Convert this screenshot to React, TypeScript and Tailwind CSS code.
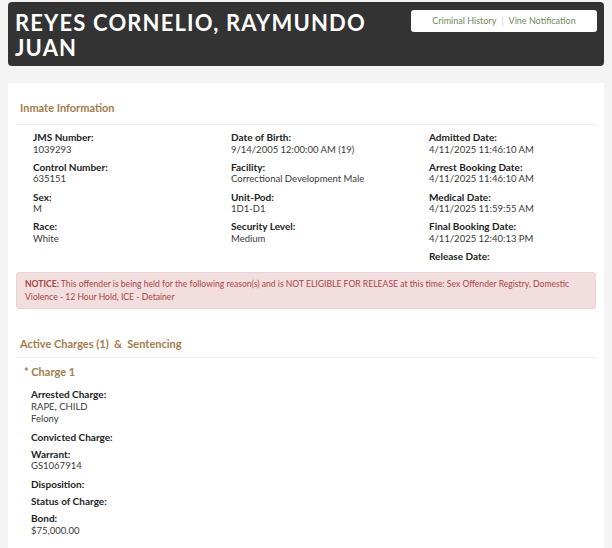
import React from "react";

const font = { fontFamily: "Lato, 'Open Sans', sans-serif" };

function Field({ label, value }: { label: string; value?: string[] }) {
  return (
    <div className="mb-[4.75px]">
      <div className="font-bold text-[10px] leading-[12.5px] text-[#222]">{label}</div>
      {value?.map((v, i) => (
        <div key={i} className="text-[9.5px] leading-[12.5px] text-[#3a3a3a]">{v}</div>
      ))}
    </div>
  );
}

export default function App() {
  return (
    <div style={font} className="min-h-[548px] w-[612px] bg-[#f4f4f4] pt-[2px] px-[8px] overflow-hidden">
      <div className="bg-[#333333] rounded-[4px] flex justify-between items-start pl-[7px] pr-[7px] pt-[8px] h-[64px]">
        <h1 className="text-white font-bold text-[22px] leading-[25px] tracking-[1.15px]">
          REYES CORNELIO, RAYMUNDO
          <br />
          JUAN
        </h1>
        <div className="mt-0 bg-white rounded-[3px] w-[186px] h-[22px] flex items-center justify-center text-[9px] text-[#6f8a5e]">
          <span>Criminal History</span>
          <span className="mx-[5px] text-[#ccc]">|</span>
          <span>Vine Notification</span>
        </div>
      </div>

      <div className="mt-[17px] bg-white pt-[18px] px-[8px] pb-[20px]">
        <div className="text-[11px] font-bold text-[#a47b4c] pl-[4px] pb-[9px] border-b border-[#ececec] leading-[14px]">
          Inmate Information
        </div>
        <div className="grid grid-cols-[198px_198px_1fr] pl-[17px] pt-[6px]">
          <div>
            <Field label="JMS Number:" value={["1039293"]} />
            <Field label="Control Number:" value={["635151"]} />
            <Field label="Sex:" value={["M"]} />
            <Field label="Race:" value={["White"]} />
          </div>
          <div>
            <Field label="Date of Birth:" value={["9/14/2005 12:00:00 AM (19)"]} />
            <Field label="Facility:" value={["Correctional Development Male"]} />
            <Field label="Unit-Pod:" value={["1D1-D1"]} />
            <Field label="Security Level:" value={["Medium"]} />
          </div>
          <div>
            <Field label="Admitted Date:" value={["4/11/2025 11:46:10 AM"]} />
            <Field label="Arrest Booking Date:" value={["4/11/2025 11:46:10 AM"]} />
            <Field label="Medical Date:" value={["4/11/2025 11:59:55 AM"]} />
            <Field label="Final Booking Date:" value={["4/11/2025 12:40:13 PM"]} />
            <Field label="Release Date:" />
          </div>
        </div>

        <p className="mt-[5px] bg-[#f2dede] border border-[#ebd3d3] rounded-[3px] px-[8px] py-[5px] text-[8.6px] leading-[12.5px] text-[#a94442]">
          <b>NOTICE:</b> This offender is being held for the following reason(s) and is NOT ELIGIBLE FOR RELEASE at this time: Sex Offender Registry, Domestic Violence - 12 Hour Hold, ICE - Detainer
        </p>

        <div className="mt-[28px] text-[11px] font-bold text-[#a47b4c] pl-[4px] pb-[6px] border-b border-[#ececec] leading-[14px]">
          Active Charges (1)&nbsp; &amp; &nbsp;Sentencing
        </div>
        <div className="pl-[8px] pt-[7px] text-[11px] font-bold text-[#a47b4c] leading-[14px]">* Charge 1</div>
        <div className="pl-[15px] pt-[9px]">
          <Field label="Arrested Charge:" value={["RAPE, CHILD", "Felony"]} />
          <Field label="Convicted Charge:" />
          <Field label="Warrant:" value={["GS1067914"]} />
          <Field label="Disposition:" />
          <Field label="Status of Charge:" />
          <Field label="Bond:" value={["$75,000.00"]} />
        </div>
      </div>
    </div>
  );
}
